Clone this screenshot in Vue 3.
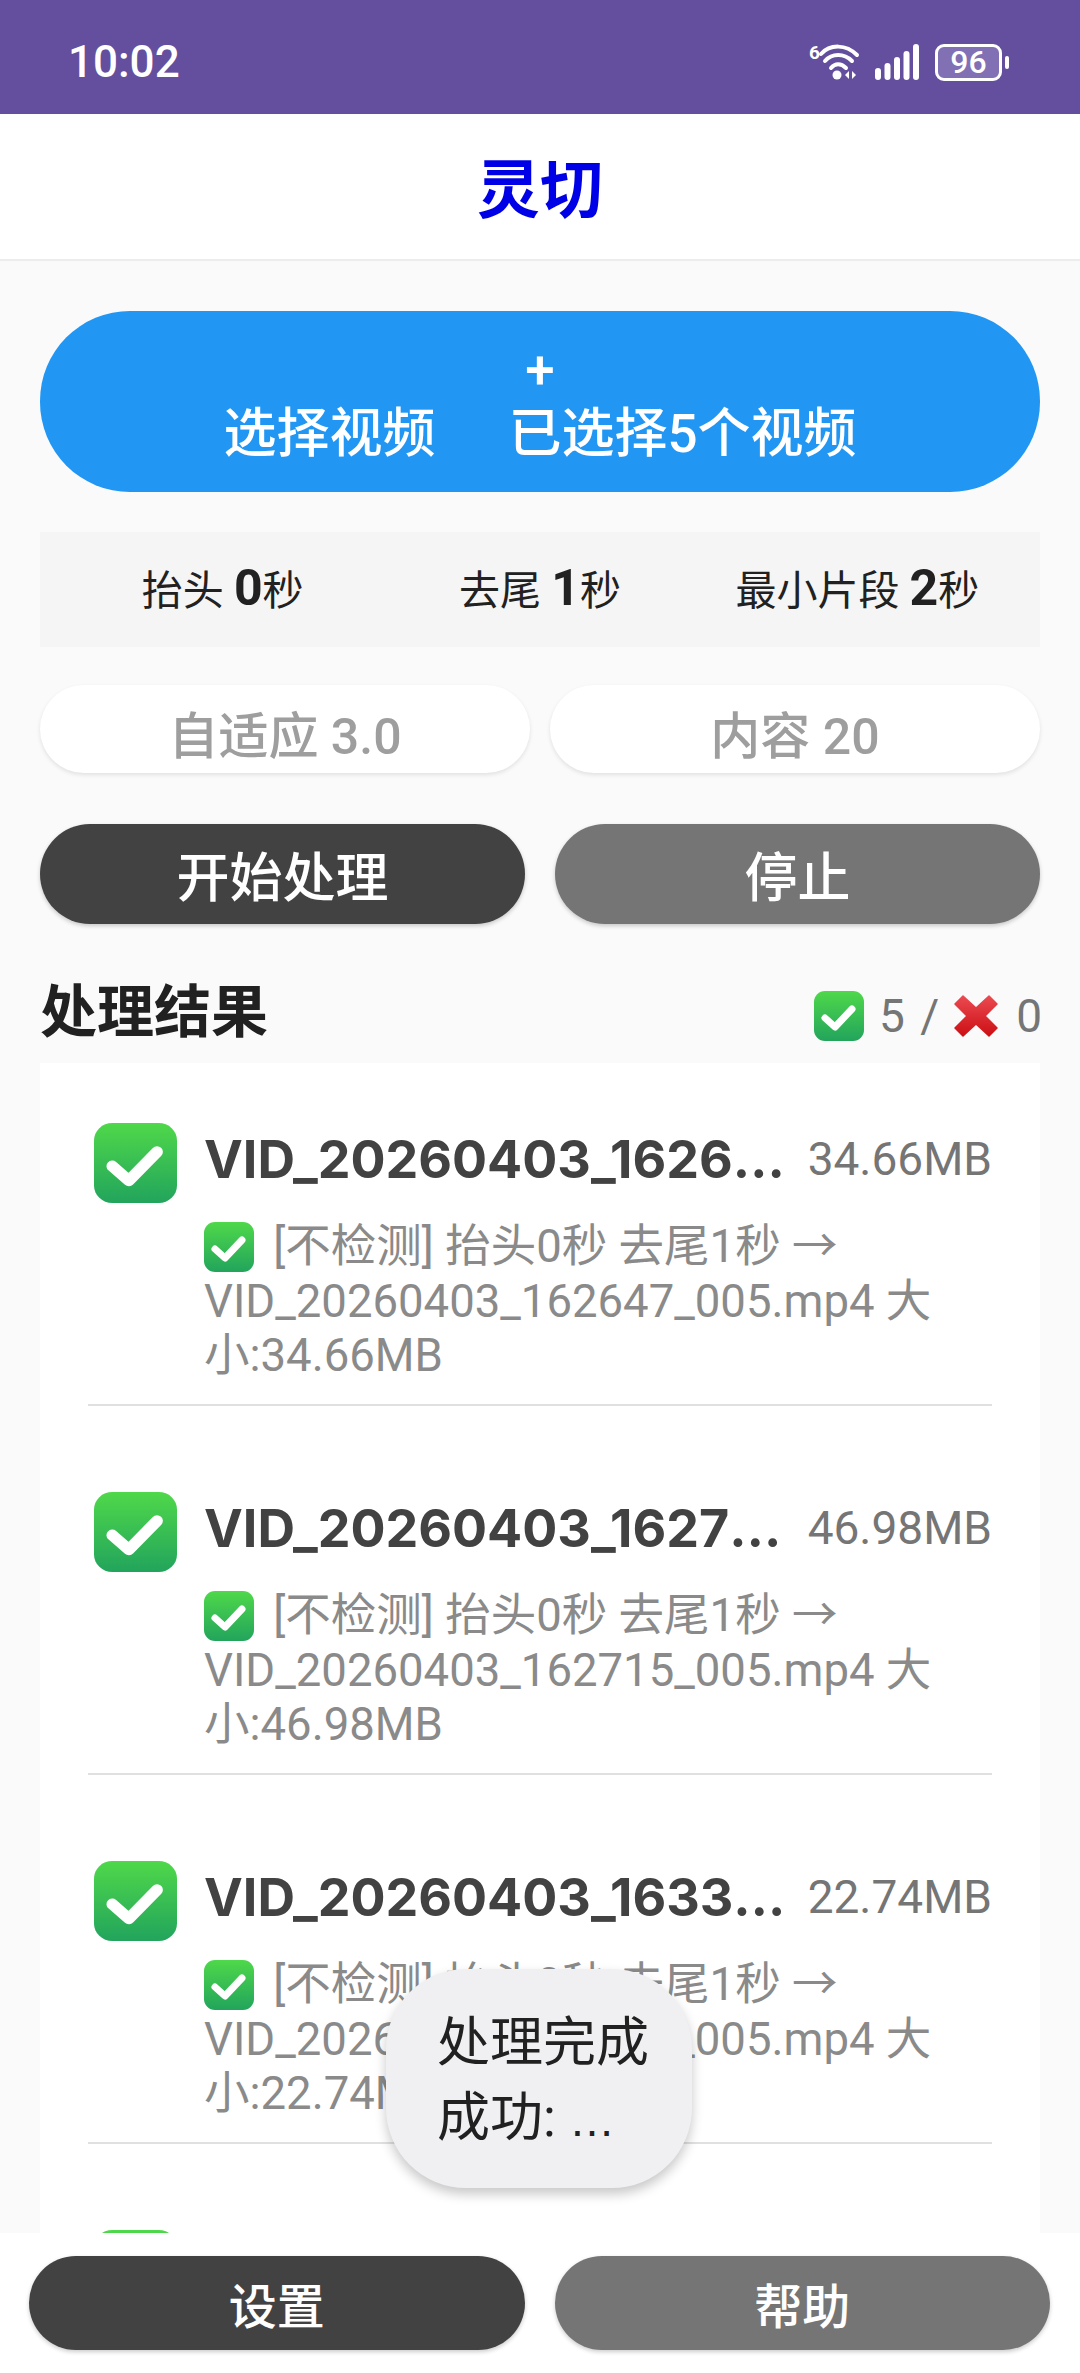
<template>
  <div class="page">
    <div class="status-bar">
      <span class="time">10:02</span>
      <div class="status-icons">
        <svg class="wifi" width="50" height="36" viewBox="0 0 50 36">
          <text x="0" y="15" class="wifi-six">6</text>
          <path d="M12 10 C21 0 37 0 48 11" fill="none" stroke="#fff" stroke-width="4" stroke-linecap="round" />
          <path d="M16 17 C23 9 35 9 43 17" fill="none" stroke="#fff" stroke-width="4" stroke-linecap="round" />
          <path d="M22 24 C26 19 32 19 37 24" fill="none" stroke="#fff" stroke-width="4" stroke-linecap="round" />
          <circle cx="28" cy="31" r="4.500" fill="#fff" />
          <path d="M40 27 L36 31 L40 35 Z M43 27 L47 31 L43 35 Z" fill="#fff" />
        </svg>
        <svg class="signal" width="44" height="36" viewBox="0 0 44 36">
          <rect x="0" y="24" width="6" height="12" rx="3" fill="#fff" />
          <rect x="9.500" y="19" width="6" height="17" rx="3" fill="#fff" />
          <rect x="19" y="13" width="6" height="23" rx="3" fill="#fff" />
          <rect x="28.500" y="7" width="6" height="29" rx="3" fill="#fff" />
          <rect x="38" y="0" width="6" height="36" rx="3" fill="#fff" />
        </svg>
        <div class="battery">
          <div class="battery-body">96</div>
          <div class="battery-tip"></div>
        </div>
      </div>
    </div>

    <header class="app-header">灵切</header>

    <div class="content">
      <div class="main">
        <button class="pick-button">
          <span class="plus">+</span>
          <span class="pick-labels">
            <span>选择视频</span>
            <span>已选择5个视频</span>
          </span>
        </button>

        <div class="stats">
          <div v-for="s in stats" :key="s.label" class="stat">
            {{ s.label }} <b>{{ s.value }}</b>秒
          </div>
        </div>

        <div class="row pills">
          <div class="pill">自适应 3.0</div>
          <div class="pill">内容 20</div>
        </div>

        <div class="row actions">
          <button class="btn dark">开始处理</button>
          <button class="btn gray">停止</button>
        </div>

        <div class="result-head">
          <h2>处理结果</h2>
          <div class="summary">
            <svg class="check small head-check" viewBox="0 0 50 50">
              <use href="#check-box" />
            </svg>
            <span class="count">5 /</span>
            <svg class="cross" width="44" height="44" viewBox="0 0 44 44">
              <path d="M9 2 L22 14 L35 2 L43 10 L31 22 L43 34 L35 42 L22 30 L9 42 L1 34 L13 22 L1 10 Z" fill="url(#redGrad)" stroke="url(#redGrad)" stroke-width="1.500" stroke-linejoin="round" />
            </svg>
            <span class="count">0</span>
          </div>
        </div>

        <div class="card">
          <div v-for="item in items" :key="item.name" class="item">
            <div class="item-top">
              <svg class="check big" viewBox="0 0 50 50" preserveAspectRatio="none">
                <use href="#check-box" />
              </svg>
              <span class="item-name">{{ item.name }}</span>
              <span class="item-size">{{ item.size }}</span>
            </div>
            <div class="item-detail">
              <svg class="check small inline" viewBox="0 0 50 50">
                <use href="#check-box" />
              </svg>
              [不检测] 抬头0秒 去尾1秒 → {{ item.name }} 大小:{{ item.size }}
            </div>
          </div>
          <div class="item">
            <div class="item-top">
              <svg class="check big" viewBox="0 0 50 50" preserveAspectRatio="none">
                <use href="#check-box" />
              </svg>
            </div>
          </div>
        </div>
      </div>

      <div class="toast">
        <div>处理完成</div>
        <div>成功: <span class="dots">…</span></div>
      </div>
    </div>

    <footer class="bottom-bar">
      <button class="btn dark foot">设置</button>
      <button class="btn gray foot">帮助</button>
    </footer>

    <svg width="0" height="0" class="defs">
      <defs>
        <linearGradient id="greenGrad" x1="0" y1="0" x2="0" y2="1">
          <stop offset="0" stop-color="#4fd84a" />
          <stop offset="1" stop-color="#22a45c" />
        </linearGradient>
        <linearGradient id="redGrad" x1="0" y1="0" x2="0" y2="1">
          <stop offset="0" stop-color="#ea4a50" />
          <stop offset="1" stop-color="#cc0f14" />
        </linearGradient>
        <g id="check-box">
          <rect x="0" y="0" width="50" height="50" rx="11" fill="url(#greenGrad)" />
          <path d="M11 27 L21 36 L38 18" fill="none" stroke="#fff" stroke-width="7" stroke-linecap="round" stroke-linejoin="round" />
        </g>
      </defs>
    </svg>
  </div>
</template>

<script setup>
const stats = [
  { label: "抬头", value: 0 },
  { label: "去尾", value: 1 },
  { label: "最小片段", value: 2 },
];

const items = [
  { name: "VID_20260403_162647_005.mp4", size: "34.66MB" },
  { name: "VID_20260403_162715_005.mp4", size: "46.98MB" },
  { name: "VID_20260403_163310_005.mp4", size: "22.74MB" },
];
</script>

<style>
html,
body {
  margin: 0;
  background: #fafafa;
}
</style>

<style scoped>
.page {
  width: 1080px;
  height: 2373px;
  display: flex;
  flex-direction: column;
  overflow: hidden;
  background: #fafafa;
  font-family: "Roboto", "Noto Sans CJK SC", sans-serif;
}

.status-bar {
  height: 114px;
  flex-shrink: 0;
  background: #634f9e;
  color: #fff;
  display: flex;
  align-items: center;
  justify-content: space-between;
  padding: 10px 71px 0 68px;
  box-sizing: border-box;
}
.time {
  font-size: 44px;
  font-weight: 500;
}
.status-icons {
  display: flex;
  align-items: center;
  gap: 16px;
}
.wifi {
  overflow: visible;
}
.wifi-six {
  font-size: 19px;
  font-weight: 700;
  fill: #fff;
}
.battery {
  display: flex;
  align-items: center;
  gap: 3px;
}
.battery-body {
  width: 61px;
  height: 31px;
  border: 3px solid #fff;
  border-radius: 9px;
  background: #8170b3;
  font-size: 32px;
  font-weight: 500;
  line-height: 31px;
  text-align: center;
}
.battery-tip {
  width: 4px;
  height: 13px;
  background: #fff;
  border-radius: 2px;
}

.app-header {
  height: 147px;
  flex-shrink: 0;
  background: #fff;
  border-bottom: 2px solid #ececec;
  box-sizing: border-box;
  padding-bottom: 5px;
  display: flex;
  align-items: center;
  justify-content: center;
  color: #0000e6;
  font-size: 63px;
  font-weight: 700;
}

.content {
  flex: 1;
  min-height: 0;
  position: relative;
  overflow: hidden;
}
.main {
  padding: 50px 40px 0;
}

button {
  border: none;
  font-family: inherit;
  color: #fff;
  padding: 0;
}

.pick-button {
  width: 100%;
  height: 181px;
  border-radius: 90px;
  background: #2196f3;
  display: flex;
  flex-direction: column;
  align-items: center;
  justify-content: center;
  font-size: 53px;
  font-weight: 500;
}
.plus {
  line-height: 62px;
}
.pick-labels {
  display: flex;
  gap: 73px;
  line-height: 62px;
  margin-top: 2px;
}

.stats {
  margin-top: 40px;
  height: 115px;
  background: #f5f5f5;
  padding: 0 24px;
  display: grid;
  grid-template-columns: repeat(3, 1fr);
  align-items: center;
}
.stat {
  text-align: center;
  font-size: 41px;
  color: #212121;
  margin-top: -6px;
}
.stat b {
  font-size: 50px;
  font-weight: 700;
}

.row {
  display: flex;
}
.pills {
  margin-top: 38px;
  gap: 20px;
}
.pill {
  flex: 1;
  height: 88px;
  box-sizing: border-box;
  padding-top: 6px;
  border-radius: 44px;
  background: #fff;
  box-shadow: 0 2px 4px rgba(0, 0, 0, 0.1);
  display: flex;
  align-items: center;
  justify-content: center;
  color: #9e9e9e;
  font-size: 50px;
  font-weight: 500;
}
.actions {
  margin-top: 51px;
  gap: 30px;
}
.btn {
  flex: 1;
  height: 100px;
  border-radius: 50px;
  font-size: 53px;
  font-weight: 500;
  box-shadow: 0 2px 4px rgba(0, 0, 0, 0.2);
}
.dark {
  background: #424242;
}
.gray {
  background: #757575;
}

.result-head {
  margin-top: 50px;
  height: 89px;
  display: flex;
  align-items: flex-start;
  justify-content: space-between;
}
.result-head h2 {
  margin: 3px 0 0;
  font-size: 57px;
  font-weight: 700;
  line-height: 72px;
  color: #212121;
}
.summary {
  display: flex;
  align-items: center;
  gap: 18px;
  margin-top: 15px;
  margin-right: -2px;
}
.count {
  font-size: 46px;
  color: #757575;
  word-spacing: 4px;
}
.cross {
  margin-left: -3px;
}
.head-check {
  margin-right: -3px;
}
.check.small {
  width: 50px;
  height: 50px;
}
.check.big {
  width: 83px;
  height: 80px;
  flex-shrink: 0;
}
.check.inline {
  vertical-align: -10px;
  margin-right: 8px;
}

.card {
  background: #fff;
  padding: 0 48px;
}
.item {
  height: 343px;
  margin-bottom: 26px;
  padding-top: 60px;
  box-sizing: border-box;
  border-bottom: 2px solid #e0e0e0;
}
.item-top {
  display: flex;
  align-items: center;
  padding-left: 6px;
  gap: 27px;
}
.item-name {
  flex: 1;
  min-width: 0;
  padding-bottom: 8px;
  white-space: nowrap;
  overflow: hidden;
  text-overflow: ellipsis;
  font-family: "Inter", "Noto Sans CJK SC", sans-serif;
  font-size: 52px;
  font-weight: 700;
  color: #424242;
}
.item-size {
  margin-left: -8px;
  padding-bottom: 8px;
  font-size: 46px;
  color: #757575;
}
.item-detail {
  margin: 17px 30px 0 116px;
  font-size: 45.500px;
  line-height: 54.500px;
  color: #8a8a8a;
}

.toast {
  position: absolute;
  left: 386px;
  top: 1708px;
  width: 306px;
  height: 219px;
  box-sizing: border-box;
  padding: 37px 0 0 51px;
  border-radius: 80px;
  background: #f0f0f2;
  box-shadow: 0 6px 12px rgba(0, 0, 0, 0.22);
  font-size: 53px;
  line-height: 75px;
  color: #212121;
}
.dots {
  font-family: "Liberation Sans", sans-serif;
  font-size: 46px;
}

.bottom-bar {
  height: 140px;
  flex-shrink: 0;
  background: #fff;
  box-sizing: border-box;
  padding: 23px 30px 0 29px;
  display: flex;
  gap: 30px;
}
.foot {
  height: 94px;
  border-radius: 47px;
  font-size: 48px;
}
.defs {
  position: absolute;
}
</style>
